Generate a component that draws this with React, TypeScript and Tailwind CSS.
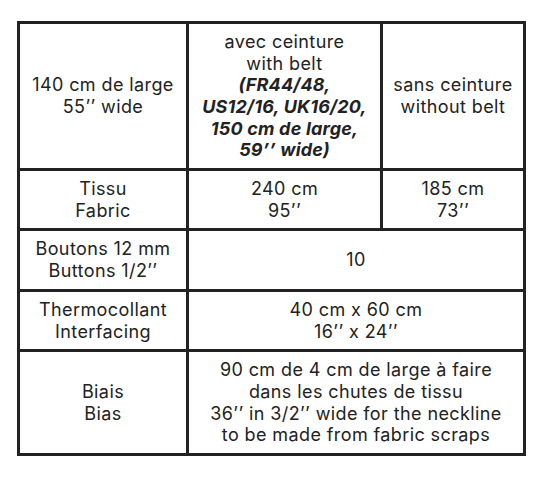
import React from "react";

const Cell = ({ children, className = "" }: { children: React.ReactNode; className?: string }) => (
  <div className={`bg-white flex items-center justify-center text-center ${className}`}>
    <div>{children}</div>
  </div>
);

export default function App() {
  return (
    <div className="w-[546px] h-[480px] bg-white pt-[21px] pl-[17px]" style={{ fontFamily: "Inter, 'Noto Sans', sans-serif" }}>
      <div className="grid grid-cols-[166px_191px_140px] grid-rows-[144px_57px_58px_57px_101px] gap-[3px] p-[3px] bg-[#222] w-[509px] text-[18px] tracking-[0.4px] leading-[21.6px] text-[#222]">
        <Cell>140 cm de large<br />55’’ wide</Cell>
        <Cell>
          avec ceinture<br />with belt<br />
          <span className="font-bold italic tracking-[0.2px]">(FR44/48,<br />US12/16, UK16/20,<br />150 cm de large,<br />59’’ wide)</span>
        </Cell>
        <Cell>sans ceinture<br />without belt</Cell>

        <Cell>Tissu<br />Fabric</Cell>
        <Cell>240 cm<br />95’’</Cell>
        <Cell>185 cm<br />73’’</Cell>

        <Cell>Boutons 12 mm<br />Buttons 1/2’’</Cell>
        <Cell className="col-span-2">10</Cell>

        <Cell>Thermocollant<br />Interfacing</Cell>
        <Cell className="col-span-2">40 cm x 60 cm<br />16’’ x 24’’</Cell>

        <Cell>Biais<br />Bias</Cell>
        <Cell className="col-span-2">
          90 cm de 4 cm de large à faire<br />dans les chutes de tissu<br />36’’ in 3/2’’ wide for the neckline<br />to be made from fabric scraps
        </Cell>
      </div>
    </div>
  );
}
